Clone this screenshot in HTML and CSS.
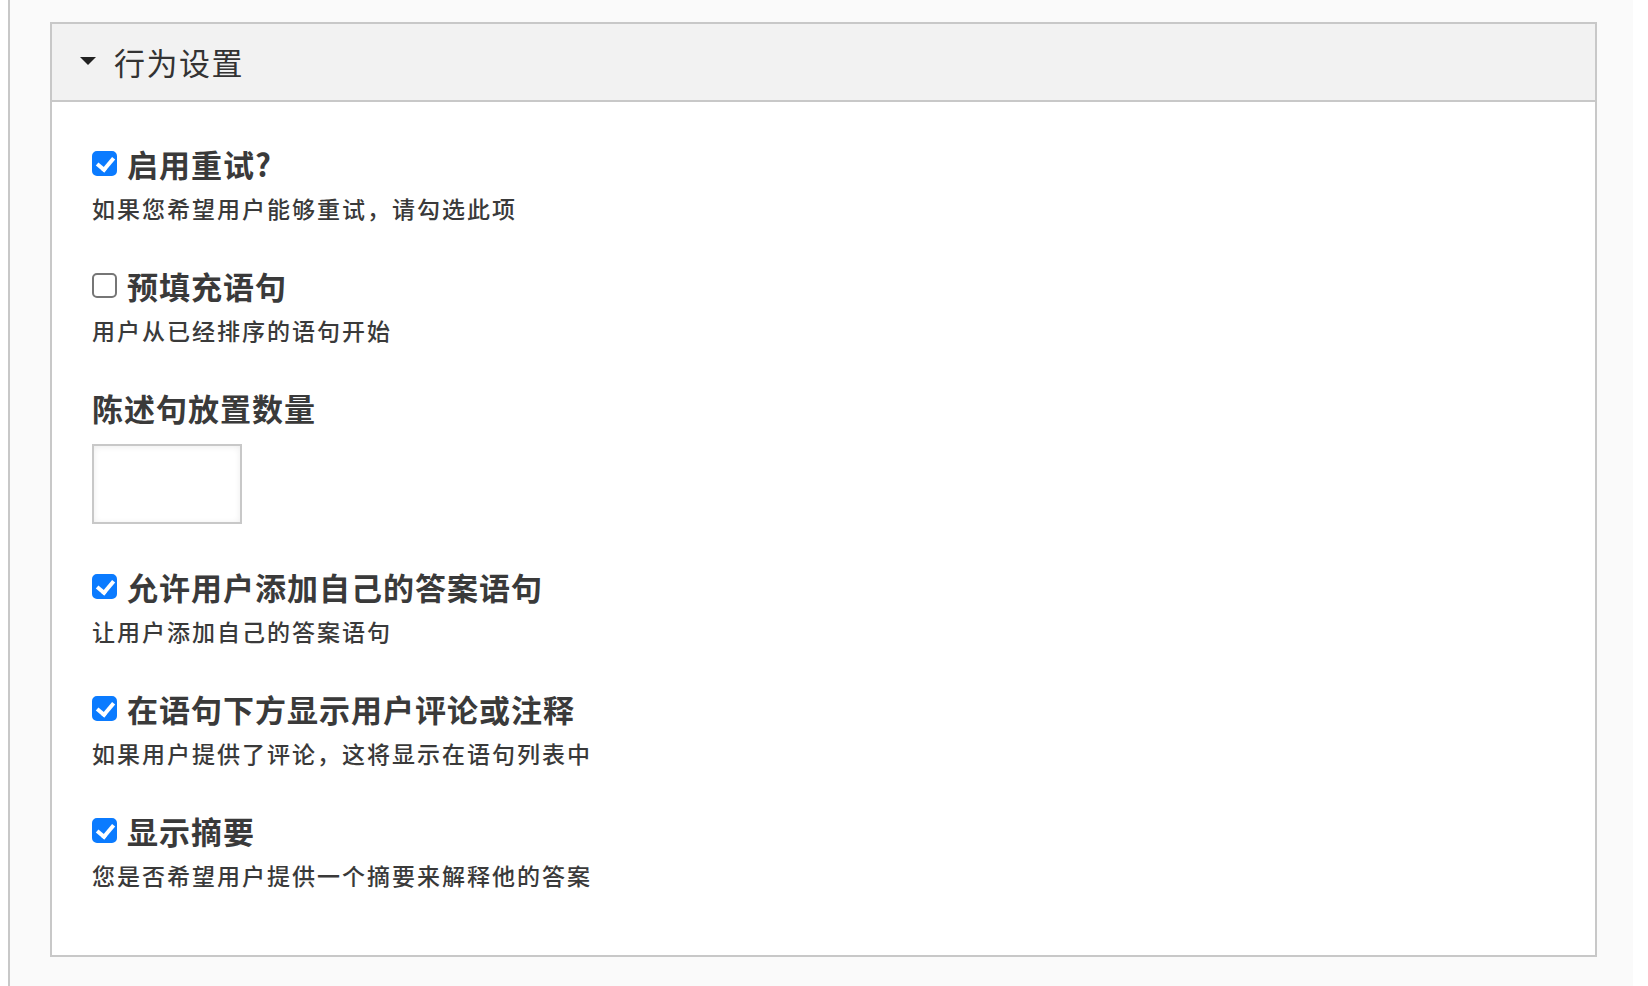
FILE: index.html
```html
<!DOCTYPE html>
<html lang="zh-CN">
<head>
	<meta charset="UTF-8">
	<title>行为设置</title>
	<link rel="stylesheet" href="styles.css">
</head>
<body>
	<div class="page">
		<div class="panel">
			<div class="panel-head"><span class="caret"></span>行为设置</div>
			<div class="panel-body">
				<div class="field">
					<label class="field-label"><input type="checkbox" checked>启用重试?</label>
					<div class="field-desc">如果您希望用户能够重试，请勾选此项</div>
				</div>
				<div class="field">
					<label class="field-label"><input type="checkbox">预填充语句</label>
					<div class="field-desc">用户从已经排序的语句开始</div>
				</div>
				<div class="field field-num">
					<label class="field-label" for="count">陈述句放置数量</label>
					<input class="num" id="count" type="text">
				</div>
				<div class="field">
					<label class="field-label"><input type="checkbox" checked>允许用户添加自己的答案语句</label>
					<div class="field-desc">让用户添加自己的答案语句</div>
				</div>
				<div class="field">
					<label class="field-label"><input type="checkbox" checked>在语句下方显示用户评论或注释</label>
					<div class="field-desc">如果用户提供了评论，这将显示在语句列表中</div>
				</div>
				<div class="field">
					<label class="field-label"><input type="checkbox" checked>显示摘要</label>
					<div class="field-desc">您是否希望用户提供一个摘要来解释他的答案</div>
				</div>
			</div>
		</div>
	</div>
</body>
</html>
```

FILE: styles.css
```css
*{margin: 0; padding: 0; box-sizing: border-box;}
body{background: #fff; font-family: "Noto Sans CJK SC", "Noto Sans", sans-serif; color: #333;}
.page{
	margin-left: 8px; width: 1625px; min-height: 986px;
	border-left: 2px solid #c8c8c8; background: #fafafa;
	padding: 22px 36px 29px 40px;
}
.panel{border: 2px solid #c8c8c8; background: #fff;}
.panel-head{
	display: flex; align-items: center; height: 78px; padding: 0 0 2px 28px;
	background: #f2f2f2; border-bottom: 2px solid #c8c8c8;
	font-size: 31px; letter-spacing: 1.5px; color: #333;
}
.caret{
	width: 0; height: 0; margin-right: 18px;
	border-left: 8px solid transparent; border-right: 8px solid transparent; border-top: 8px solid #222;
}
.panel-body{padding: 41px 40px 23px 40px;}
.field{margin-bottom: 43px;}
.field-num{margin-bottom: 42px;}
.field-label{
	display: flex; align-items: center; height: 40px;
	font-size: 31px; font-weight: 700; letter-spacing: 1px; color: #3a3a3a;
}
.field-label input{
	-webkit-appearance: none; appearance: none; flex: none;
	width: 25px; height: 25px; margin-right: 10px; position: relative;
	border: 2px solid #767676; border-radius: 5px; background: #fff;
}
.field-label input:checked{background: #0b7bff; border-color: #0b7bff;}
.field-label input:checked::after{
	content: ""; position: absolute; left: 6px; top: 1px;
	width: 7px; height: 13px;
	border-right: 4px solid #fff; border-bottom: 4px solid #fff;
	transform: rotate(40deg);
}
.field-desc{margin-top: 11px; font-size: 23px; line-height: 28px; font-weight: 500; letter-spacing: 2px; color: #3a3a3a;}
.num{
	display: block; width: 150px; height: 80px; margin-top: 17px;
	border: 2px solid #c8c8c8; background: #fff;
	box-shadow: inset 0 1px 6px rgba(0,0,0,.08);
}
```
